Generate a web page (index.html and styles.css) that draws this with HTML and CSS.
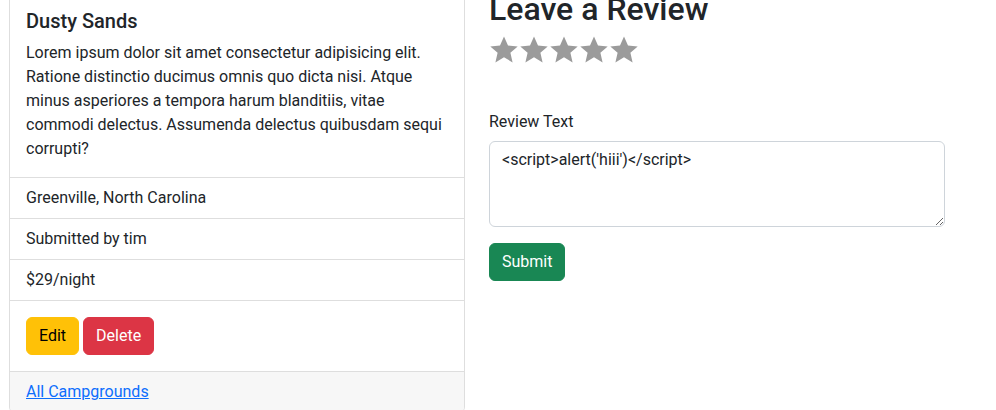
FILE: index.html
```html
<!DOCTYPE html>
<html lang="en">
<head>
<meta charset="utf-8">
<title>Dusty Sands</title>
<link rel="stylesheet" href="styles.css">
</head>
<body>
<div class="row">
  <div class="col">
    <div class="card">
      <div class="card-body">
        <h5 class="card-title">Dusty Sands</h5>
        <p class="card-text">Lorem ipsum dolor sit amet consectetur adipisicing elit. Ratione distinctio ducimus omnis quo dicta nisi. Atque minus asperiores a tempora harum blanditiis, vitae commodi delectus. Assumenda delectus quibusdam sequi corrupti?</p>
      </div>
      <ul class="list-group">
        <li class="list-item">Greenville, North Carolina</li>
        <li class="list-item">Submitted by tim</li>
        <li class="list-item">$29/night</li>
      </ul>
      <div class="card-body actions">
        <a class="btn btn-warning" href="#">Edit</a>
        <button class="btn btn-danger" type="button">Delete</button>
      </div>
      <div class="card-footer">
        <a class="link" href="#">All Campgrounds</a>
      </div>
    </div>
  </div>
  <div class="col">
    <h2 class="review-title">Leave a Review</h2>
    <div class="stars">
      <svg class="star" viewBox="0 0 30 30"><polygon points="15,1.5 19,10.6 28.7,11.4 21.4,17.8 23.6,27.4 15,22.3 6.4,27.4 8.6,17.8 1.3,11.4 11,10.6"/></svg>
      <svg class="star" viewBox="0 0 30 30"><polygon points="15,1.5 19,10.6 28.7,11.4 21.4,17.8 23.6,27.4 15,22.3 6.4,27.4 8.6,17.8 1.3,11.4 11,10.6"/></svg>
      <svg class="star" viewBox="0 0 30 30"><polygon points="15,1.5 19,10.6 28.7,11.4 21.4,17.8 23.6,27.4 15,22.3 6.4,27.4 8.6,17.8 1.3,11.4 11,10.6"/></svg>
      <svg class="star" viewBox="0 0 30 30"><polygon points="15,1.5 19,10.6 28.7,11.4 21.4,17.8 23.6,27.4 15,22.3 6.4,27.4 8.6,17.8 1.3,11.4 11,10.6"/></svg>
      <svg class="star" viewBox="0 0 30 30"><polygon points="15,1.5 19,10.6 28.7,11.4 21.4,17.8 23.6,27.4 15,22.3 6.4,27.4 8.6,17.8 1.3,11.4 11,10.6"/></svg>
    </div>
    <form class="review-form">
      <label class="form-label" for="body">Review Text</label>
      <textarea class="form-control" id="body" rows="3">&lt;script&gt;alert('hiii')&lt;/script&gt;</textarea>
      <button class="btn btn-success" type="button">Submit</button>
    </form>
  </div>
</div>
</body>
</html>
```
FILE: styles.css
```css
* { box-sizing: border-box; }
html, body {
  margin: 0;
  background: #fff;
  overflow: hidden;
}
body {
  font-family: Roboto, "Liberation Sans", sans-serif;
  font-size: 16px;
  line-height: 1.5;
  color: #212529;
}
.row {
  display: grid;
  grid-template-columns: 456px 456px;
  column-gap: 24px;
  padding-left: 9px;
  margin-top: -8px;
  align-items: start;
}
.card {
  border: 1px solid #dedede;
  border-radius: 6px;
  display: flex;
  flex-direction: column;
  overflow: hidden;
}
.card-body {
  padding: 16px;
}
.card-title {
  margin: 0 0 8px;
  font-size: 20px;
  font-weight: 500;
  line-height: 24px;
}
.card-text {
  margin: 0;
}
.list-group {
  list-style: none;
  margin: 0;
  padding: 0;
}
.list-item {
  border-top: 1px solid #dedede;
  padding: 8px 16px;
}
.actions {
  border-top: 1px solid #dedede;
  display: flex;
  gap: 4px;
}
.btn {
  display: inline-block;
  font-family: inherit;
  font-size: 16px;
  line-height: 24px;
  padding: 6px 12px;
  border: 1px solid transparent;
  border-radius: 6px;
  text-decoration: none;
  cursor: pointer;
}
.btn-warning { background: #ffc107; border-color: #ffc107; color: #000; }
.btn-danger { background: #dc3545; border-color: #dc3545; color: #fff; }
.btn-success { background: #198754; border-color: #198754; color: #fff; }
.card-footer {
  border-top: 1px solid #dedede;
  background: #f7f7f7;
  padding: 8px 16px;
}
.link {
  color: #0d6efd;
  text-decoration: underline;
}
.review-title {
  margin: -1px 0 8px;
  font-size: 32px;
  font-weight: 500;
  line-height: 36px;
}
.stars {
  display: flex;
  height: 58px;
  margin-bottom: 16px;
  align-items: flex-start;
}
.star {
  width: 30px;
  height: 30px;
  fill: #9b9b9b;
}
.review-form {
  display: flex;
  flex-direction: column;
  align-items: flex-start;
}
.form-label {
  margin-bottom: 8px;
  padding-top: 1px;
}
.form-control {
  width: 100%;
  font-family: inherit;
  font-size: 16px;
  line-height: 24px;
  color: #212529;
  padding: 6px 12px;
  border: 1px solid #ced4da;
  border-radius: 6px;
  margin: -1px 0 16px;
  resize: vertical;
}
```
